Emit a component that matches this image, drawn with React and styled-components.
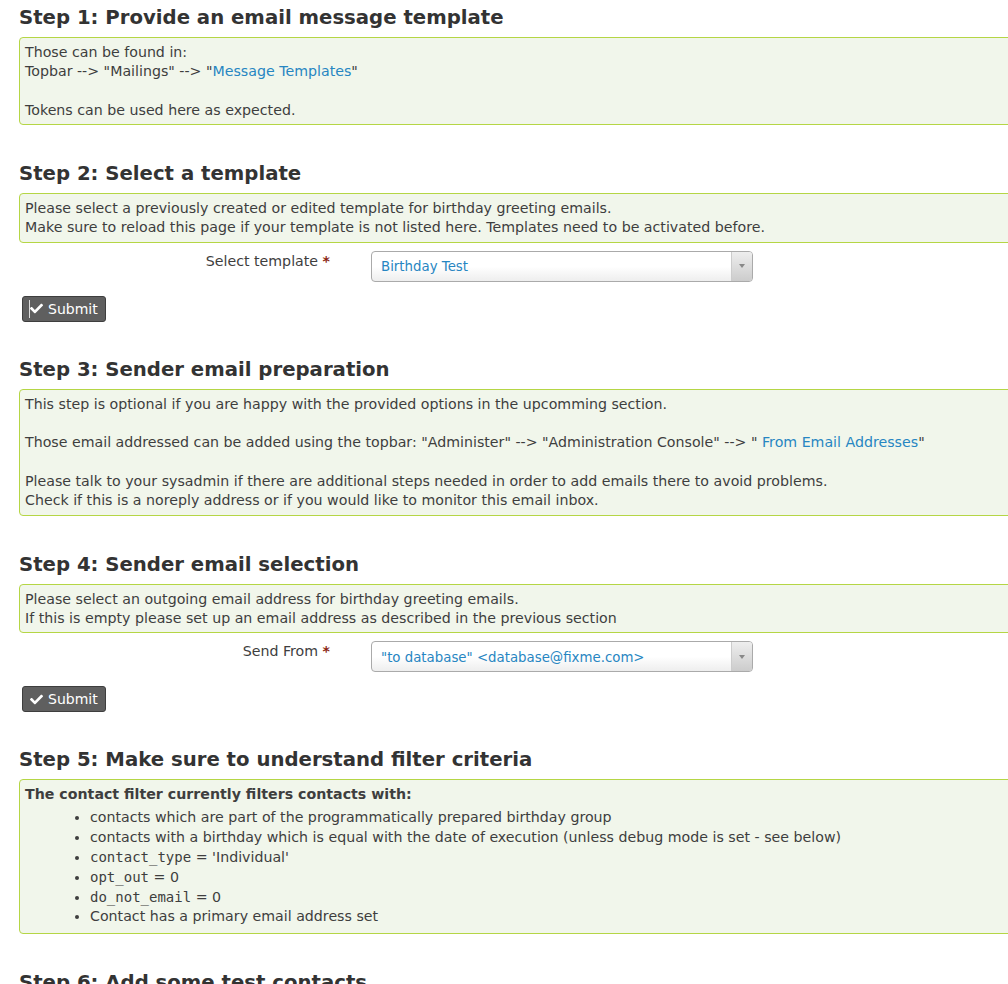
import styled, { createGlobalStyle } from "styled-components";
import { FaCheck } from "react-icons/fa";

const GlobalStyle = createGlobalStyle`
  html, body {
    margin: 0;
    padding: 0;
    background: #fff;
    overflow-x: hidden;
  }
  body {
    font-family: "DejaVu Sans", "Liberation Sans", sans-serif;
    font-size: 14.2px;
    line-height: 19.3px;
    color: #3e3e3e;
  }
`;

const Page = styled.div`
  padding: 6px 0 0 19px;
`;

const Section = styled.section`
  margin-bottom: 37px;
`;

const Heading = styled.h3`
  margin: 0 0 7px;
  font-size: 19.7px;
  line-height: 24px;
  font-weight: bold;
  color: #333;
`;

const HelpBox = styled.div`
  width: calc(100% + 40px);
  box-sizing: border-box;
  padding: 5px 5px 4px;
  background: #f1f6eb;
  border: 1px solid #b5d645;
  border-radius: 4px;
`;

const Line = styled.div`
  min-height: 19.3px;
`;

const Link = styled.a`
  color: #2786c2;
  text-decoration: none;
`;

const FormRow = styled.div`
  display: grid;
  grid-template-columns: 311px 382px;
  column-gap: 41px;
  align-items: start;
  margin-top: 8px;
`;

const Label = styled.label`
  text-align: right;
  line-height: 20px;
`;

const Required = styled.span`
  color: #8a1f11;
  font-weight: bold;
`;

const Select = styled.div`
  display: flex;
  align-items: center;
  height: 31px;
  box-sizing: border-box;
  border: 1px solid #aaa;
  border-radius: 4px;
  background: linear-gradient(#fff 0%, #fff 50%, #eee 100%);
  overflow: hidden;
`;

const SelectValue = styled.span`
  flex: 1;
  padding: 1px 0 0 9px;
  font-size: 13.33px;
  color: #2786c2;
  white-space: nowrap;
`;

const SelectArrow = styled.span`
  width: 20px;
  align-self: stretch;
  display: flex;
  align-items: center;
  justify-content: center;
  border-left: 1px solid #ccc;
  background: linear-gradient(#eee, #ccc);

  &::after {
    content: "";
    border-left: 3px solid transparent;
    border-right: 3px solid transparent;
    border-top: 4px solid #888;
  }
`;

const Button = styled.button`
  position: relative;
  display: inline-flex;
  align-items: center;
  gap: 5px;
  height: 26px;
  width: 84px;
  margin: 14px 0 -1px 3px;
  padding: 0 0 0 7px;
  box-sizing: border-box;
  font-family: inherit;
  font-size: 14px;
  color: #fff;
  background: #5f5f5f;
  border: 1px solid #3e3e3e;
  border-radius: 3px;

  svg {
    width: 13px;
    height: 13px;
  }

  ${({ $caret }) =>
    $caret &&
    `
    &::before {
      content: "";
      position: absolute;
      left: 6px;
      top: 3px;
      width: 1px;
      height: 18px;
      background: #ddd;
    }
  `}
`;

const Bold = styled.div`
  font-weight: bold;
`;

const List = styled.ul`
  margin: 4px 0 2px;
  padding-left: 65px;
  line-height: 19.8px;
`;

const Code = styled.code`
  font-family: "DejaVu Sans Mono", "Liberation Mono", monospace;
  font-size: 14px;
`;

const Submit = ({ caret }) => (
  <Button type="button" $caret={caret}>
    <FaCheck />
    Submit
  </Button>
);

const SelectField = ({ label, value }) => (
  <FormRow>
    <Label>
      {label} <Required>*</Required>
    </Label>
    <Select>
      <SelectValue>{value}</SelectValue>
      <SelectArrow />
    </Select>
  </FormRow>
);

const App = () => {
  return (
    <>
      <GlobalStyle />
      <Page>
        <Section>
          <Heading>Step 1: Provide an email message template</Heading>
          <HelpBox>
            <Line>Those can be found in:</Line>
            <Line>
              Topbar --&gt; "Mailings" --&gt; "<Link>Message Templates</Link>"
            </Line>
            <Line />
            <Line>Tokens can be used here as expected.</Line>
          </HelpBox>
        </Section>

        <Section>
          <Heading>Step 2: Select a template</Heading>
          <HelpBox>
            <Line>
              Please select a previously created or edited template for birthday greeting emails.
            </Line>
            <Line>
              Make sure to reload this page if your template is not listed here. Templates need to be
              activated before.
            </Line>
          </HelpBox>
          <SelectField label="Select template" value="Birthday Test" />
          <Submit caret />
        </Section>

        <Section>
          <Heading>Step 3: Sender email preparation</Heading>
          <HelpBox>
            <Line>
              This step is optional if you are happy with the provided options in the upcomming
              section.
            </Line>
            <Line />
            <Line>
              Those email addressed can be added using the topbar: "Administer" --&gt;
              "Administration Console" --&gt; "<Link> From Email Addresses</Link>"
            </Line>
            <Line />
            <Line>
              Please talk to your sysadmin if there are additional steps needed in order to add
              emails there to avoid problems.
            </Line>
            <Line>
              Check if this is a noreply address or if you would like to monitor this email inbox.
            </Line>
          </HelpBox>
        </Section>

        <Section>
          <Heading>Step 4: Sender email selection</Heading>
          <HelpBox>
            <Line>Please select an outgoing email address for birthday greeting emails.</Line>
            <Line>
              If this is empty please set up an email address as described in the previous section
            </Line>
          </HelpBox>
          <SelectField label="Send From" value={'"to database" <database@fixme.com>'} />
          <Submit />
        </Section>

        <Section>
          <Heading>Step 5: Make sure to understand filter criteria</Heading>
          <HelpBox>
            <Bold>The contact filter currently filters contacts with:</Bold>
            <List>
              <li>contacts which are part of the programmatically prepared birthday group</li>
              <li>
                contacts with a birthday which is equal with the date of execution (unless debug
                mode is set - see below)
              </li>
              <li>
                <Code>contact_type</Code> = 'Individual'
              </li>
              <li>
                <Code>opt_out</Code> = 0
              </li>
              <li>
                <Code>do_not_email</Code> = 0
              </li>
              <li>Contact has a primary email address set</li>
            </List>
          </HelpBox>
        </Section>

        <Section>
          <Heading>Step 6: Add some test contacts</Heading>
        </Section>
      </Page>
    </>
  );
};

export default App;
